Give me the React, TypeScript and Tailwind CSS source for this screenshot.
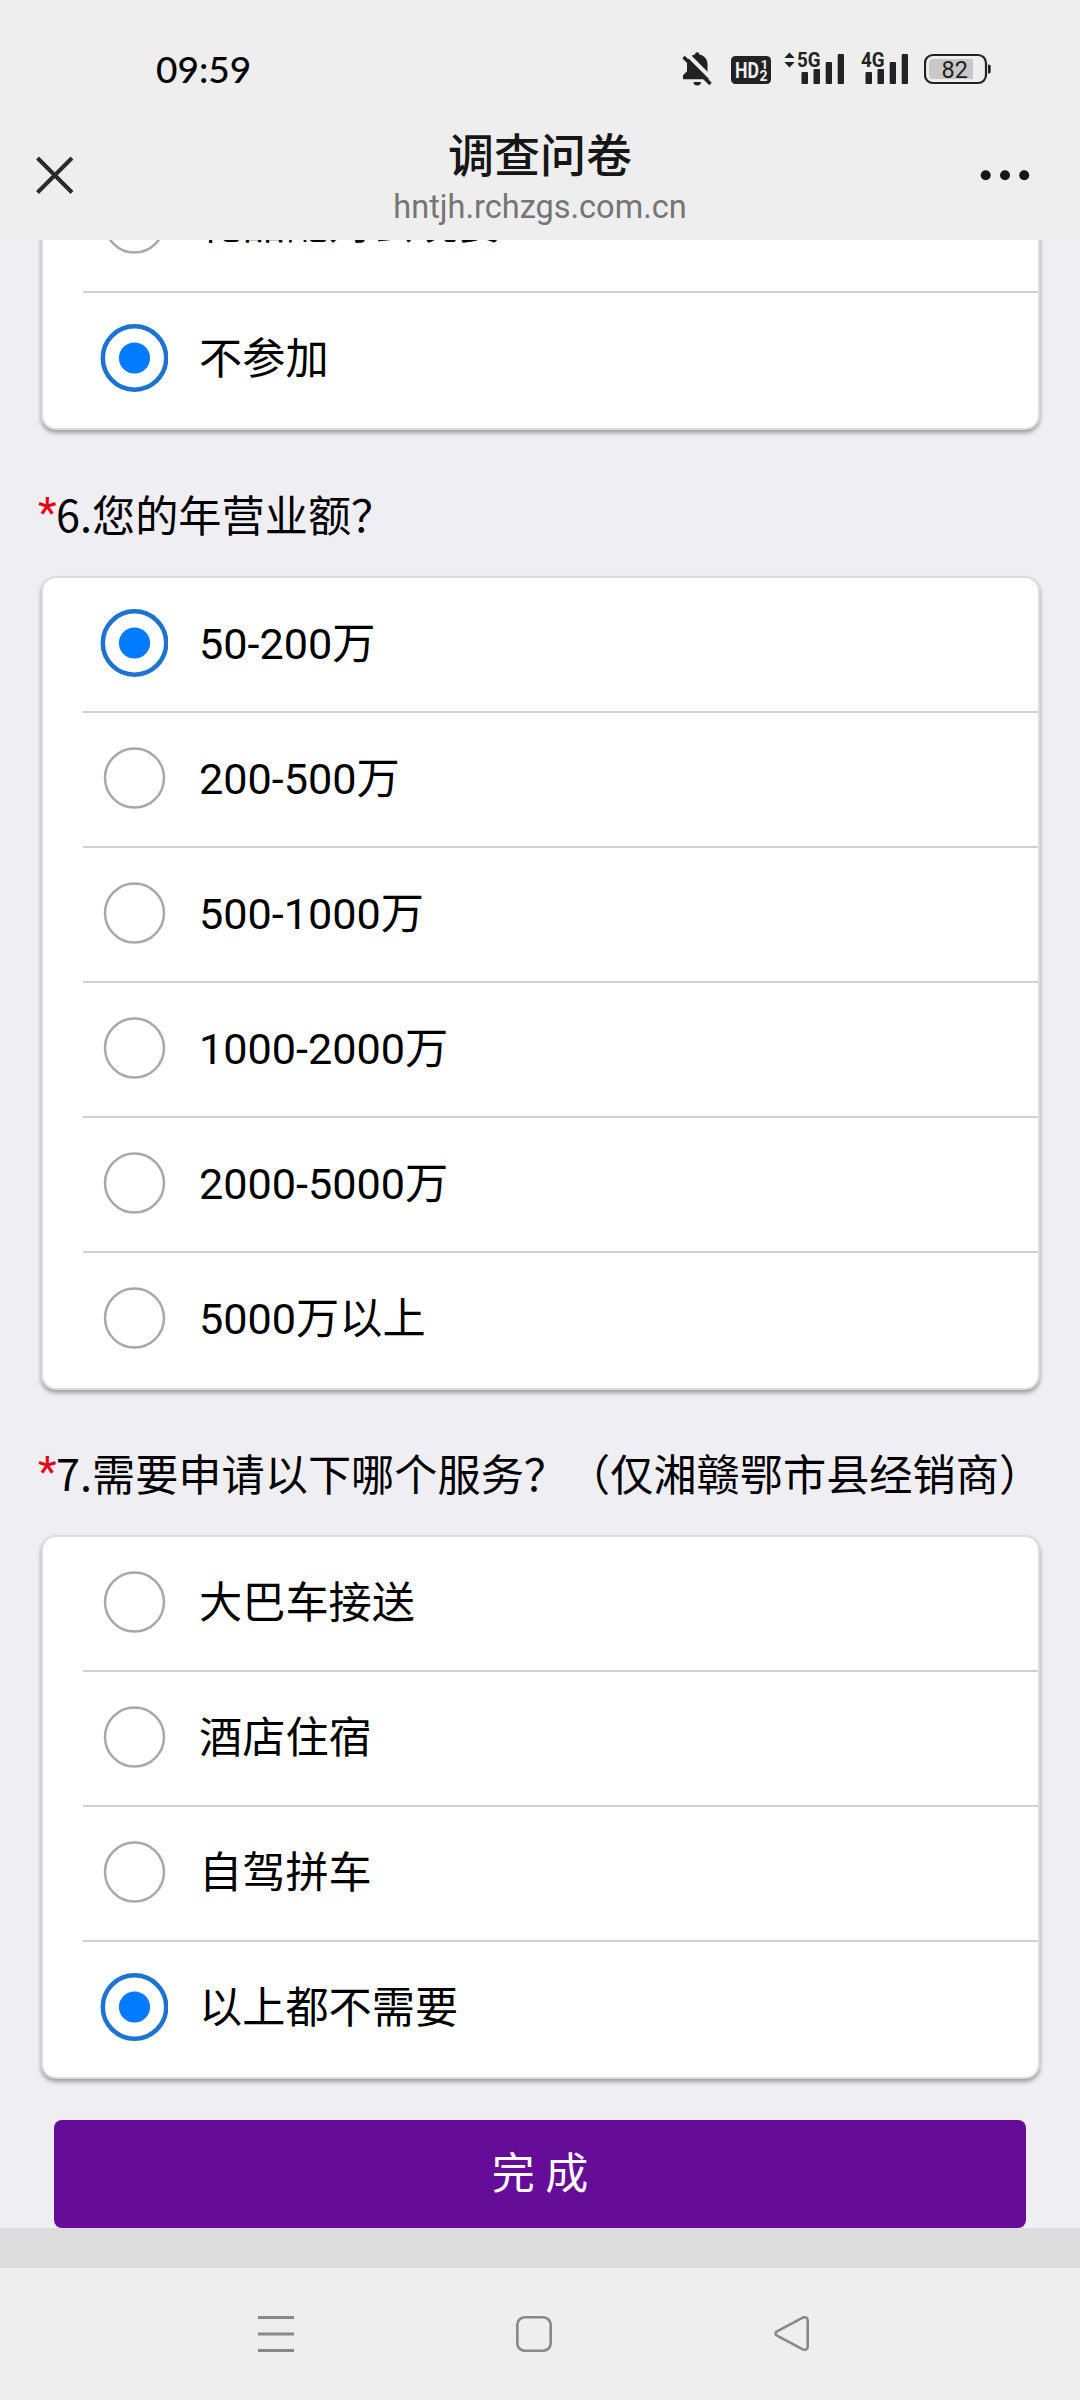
import clsx from "clsx";

interface Question {
  id: string;
  title: string;
  options: string[];
  selected: number;
}

const questions: Question[] = [
  {
    id: "revenue",
    title: "6.您的年营业额？",
    options: [
      "50-200万",
      "200-500万",
      "500-1000万",
      "1000-2000万",
      "2000-5000万",
      "5000万以上",
    ],
    selected: 0,
  },
  {
    id: "service",
    title: "7.需要申请以下哪个服务？（仅湘赣鄂市县经销商）",
    options: ["大巴车接送", "酒店住宿", "自驾拼车", "以上都不需要"],
    selected: 3,
  },
];

function BellOffIcon() {
  return (
    <svg width="31" height="36" viewBox="0 0 31 36" fill="#222">
      <path d="M13 3.5a2.2 2.2 0 0 1 4.4 0C22.500 4.500 25.500 8.500 25.500 13v8.500l4 4v2.700H1v-4l4-4V13c0-4.500 3-8.500 8-9.500z" />
      <path d="M11.500 31h7.500a3.700 3.400 0 0 1-7.500 0z" />
      <path d="M4 2 31.500 29.500" stroke="#eee" strokeWidth="4" />
      <path d="M1.500 6 28.500 33" stroke="#222" strokeWidth="3.400" />
    </svg>
  );
}

function HdIcon() {
  return (
    <svg width="40" height="36" viewBox="0 0 40 36" className="font-[Roboto,sans-serif]">
      <rect y="5" width="40" height="28" rx="4.500" fill="#222" />
      <g fill="#eee" fontWeight="700">
        <text x="4" y="27" fontSize="22.500" textLength="24" lengthAdjust="spacingAndGlyphs">
          HD
        </text>
        <text x="29.500" y="18" fontSize="13.500">1</text>
        <text x="28.500" y="29.800" fontSize="14">2</text>
      </g>
    </svg>
  );
}

interface SignalIconProps {
  label: string;
  active?: boolean;
}

function SignalIcon({ label, active }: SignalIconProps) {
  return (
    <svg
      width={active ? 60 : 47}
      height="36"
      viewBox={active ? "-13 0 60 36" : "0 0 47 36"}
      fill="#222"
      className="overflow-visible font-[Roboto,sans-serif]"
    >
      {active && <path d="M-7.500 1.500-2.300 7h-10.400zM-7.500 16.500l-5.200-5.500h10.400z" />}
      <text x="0" y="15.800" fontSize="20" fontWeight="700" textLength="23.500" lengthAdjust="spacingAndGlyphs">
        {label}
      </text>
      <rect x="4.500" y="21" width="6.500" height="12" rx="1" />
      <rect x="16.500" y="18" width="6.500" height="15" rx="1" />
      <rect x="28.700" y="11" width="6.300" height="22" rx="1" />
      <rect x="40.700" y="3" width="6.300" height="30" rx="1" />
    </svg>
  );
}

function BatteryIcon() {
  return (
    <svg width="68" height="36" viewBox="0 0 68 36" className="font-[Roboto,sans-serif]">
      <rect x="1" y="4" width="61" height="28" rx="8" fill="none" stroke="#222" strokeWidth="2.200" />
      <path d="M9 8h40v20H9a4 4 0 0 1-4-4V12a4 4 0 0 1 4-4z" fill="#c8c8c8" />
      <path d="M64 13.500c2.500 0 2.700 1 2.700 2v5c0 1-.2 2-2.700 2z" fill="#222" />
      <text x="17.500" y="27" fontSize="23.500" fill="#222">82</text>
    </svg>
  );
}

function StatusBar() {
  return (
    <div className="flex h-[122px] items-start justify-between pl-[156px] pr-[88px] pt-[51px]">
      <span className="-mt-px font-[Lato,sans-serif] text-[37px] leading-[38px] font-medium text-black">
        09:59
      </span>
      <div className="flex">
        <BellOffIcon />
        <div className="ml-[18px]">
          <HdIcon />
        </div>
        <div className="ml-[13px]">
          <SignalIcon label="5G" active />
        </div>
        <div className="ml-[17px]">
          <SignalIcon label="4G" />
        </div>
        <div className="ml-4">
          <BatteryIcon />
        </div>
      </div>
    </div>
  );
}

function Header() {
  return (
    <div className="flex h-[118px] items-start justify-between pl-9 pr-[50px]">
      <div className="w-16 pt-[34px]">
        <svg width="38" height="38" viewBox="0 0 38 38">
          <path d="M1.500 2 36 36.500M36 2 1.500 36.500" stroke="#2a2a2a" strokeWidth="4" />
        </svg>
      </div>
      <div className="flex flex-col items-center pt-px">
        <h1 className="text-[46px] leading-[66px] font-medium text-[#161616]">调查问卷</h1>
        <p className="font-[Roboto,sans-serif] text-[32.5px] leading-9 text-[#757575]">
          hntjh.rchzgs.com.cn
        </p>
      </div>
      <svg width="50" height="12" viewBox="0 0 50 12" fill="#161616" className="mt-[47px]">
        <circle cx="5.700" cy="6.300" r="5" />
        <circle cx="25" cy="6.300" r="5" />
        <circle cx="44.200" cy="6.300" r="5" />
      </svg>
    </div>
  );
}

function Radio({ checked }: { checked: boolean }) {
  return (
    <svg width="68" height="68" viewBox="0 0 68 68" fill="none" className="shrink-0">
      {checked ? (
        <>
          <circle cx="34.500" cy="34" r="31.700" stroke="#1d74d0" strokeWidth="4.500" />
          <circle cx="34.500" cy="34" r="15.600" fill="#007aff" />
        </>
      ) : (
        <circle cx="34.500" cy="34" r="29.500" stroke="#a8a8a8" strokeWidth="2.500" />
      )}
    </svg>
  );
}

interface OptionRowProps {
  label: string;
  checked: boolean;
  first?: boolean;
  last?: boolean;
}

function OptionRow({ label, checked, first, last }: OptionRowProps) {
  return (
    <label
      className={clsx(
        "ml-10 flex items-start pl-[17px]",
        first ? "h-[133px] pt-[31px]" : "border-t-2 border-[#d0d0d0] pt-[31px]",
        !first && (last ? "h-[137px]" : "h-[135px]"),
      )}
    >
      <Radio checked={checked} />
      <span className="ml-[31px] pt-0.5 text-[43.2px] leading-[68px] text-black">{label}</span>
    </label>
  );
}

const cardClass =
  "ml-[41px] mr-10 rounded-[15px] border-2 border-[#dcdcde] bg-white shadow-[0_3px_4px_rgba(0,0,0,0.35)]";

function QuestionBlock({ title, options, selected }: Question) {
  return (
    <section>
      <h2 className="flex h-[145.5px] items-center pl-9 pt-5 text-[43.2px] leading-[64px] font-[Noto_Sans_CJK_SC,sans-serif] whitespace-nowrap text-black">
        <span className="w-5 pl-0.5 font-[Roboto,sans-serif] text-[#e60012]">*</span>
        {title}
      </h2>
      <div className={cardClass}>
        {options.map((option, i) => (
          <OptionRow
            key={option}
            label={option}
            checked={i === selected}
            first={i === 0}
            last={i === options.length - 1}
          />
        ))}
      </div>
    </section>
  );
}

function NavBar() {
  return (
    <div className="flex h-[132px] items-start bg-[#eee] pl-[258px] pt-12">
      <svg width="36" height="36" viewBox="0 0 36 36" stroke="#888" strokeWidth="3">
        <path d="M0 1.500h36M0 18h36M0 34.500h36" />
      </svg>
      <svg width="36" height="36" viewBox="0 0 36 36" fill="none" stroke="#888" strokeWidth="2.600" className="ml-[222px]">
        <rect x="1.300" y="1.300" width="33.400" height="33.400" rx="7.500" />
      </svg>
      <svg width="36" height="36" viewBox="0 0 36 36" fill="none" stroke="#888" strokeWidth="2.600" className="ml-[222px]">
        <path d="M2.600 15.700 28.300 1.800C31 .4 33.700 1.200 33.700 4.500v26c0 3.300-2.700 4.100-5.400 2.700L2.600 19.300c-1.500-.9-1.500-2.700 0-3.600z" />
      </svg>
    </div>
  );
}

export default function App() {
  return (
    <div className="flex h-[2400px] w-[1080px] flex-col overflow-hidden bg-[#efeef3] font-[Roboto,'Noto_Sans_CJK_SC',sans-serif]">
      <header className="shrink-0 bg-[#eee]">
        <StatusBar />
        <Header />
      </header>
      <main className="flex h-[1988px] shrink-0 flex-col overflow-hidden">
        <div className="flex h-[190px] shrink-0 flex-col justify-end">
          <div className={clsx(cardClass, "border-t-0")}>
            <OptionRow label="礼品配对会晚宴" checked={false} />
            <OptionRow label="不参加" checked last />
          </div>
        </div>
        {questions.map((question) => (
          <QuestionBlock key={question.id} {...question} />
        ))}
        <button
          type="button"
          className="mx-[54px] mt-auto h-[108px] shrink-0 rounded-lg bg-[#650d99] text-[43px] text-white"
        >
          完 成
        </button>
      </main>
      <div className="h-10 shrink-0 bg-[#dcdcdc]" />
      <NavBar />
    </div>
  );
}
